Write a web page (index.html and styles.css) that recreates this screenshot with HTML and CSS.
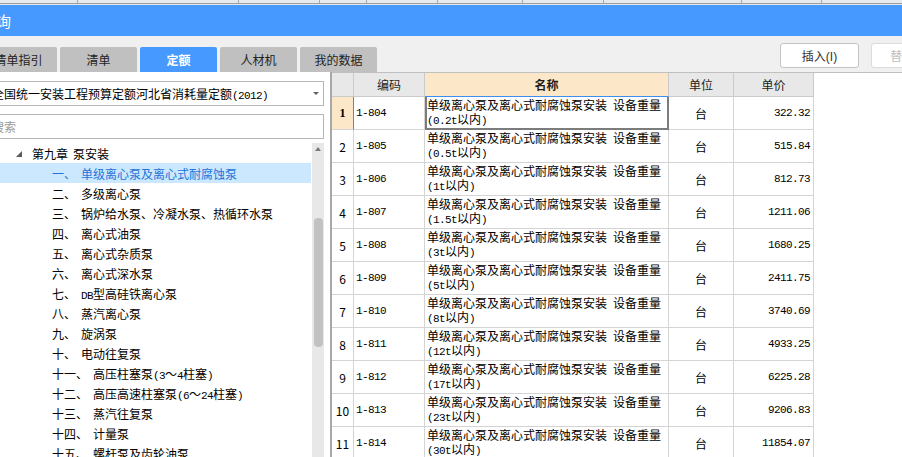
FILE: index.html
```html
<!DOCTYPE html>
<html lang="zh-CN">
<head>
<meta charset="utf-8">
<title>定额查询</title>
<link rel="stylesheet" href="styles.css">
</head>
<body>
<div class="app">
  <div class="ruler"><span></span><span></span><span></span><span></span><span></span><span></span><span></span><span></span><span></span><span></span></div>
  <div class="titlebar"><span class="title">查询</span></div>
  <div class="toolbar">
    <nav class="tabs">
      <div class="tab">清单指引</div>
      <div class="tab">清单</div>
      <div class="tab active">定额</div>
      <div class="tab">人材机</div>
      <div class="tab">我的数据</div>
    </nav>
    <div class="actions">
      <button class="btn">插入<span class="paren">(I)</span></button>
      <button class="btn disabled">替换<span class="paren">(R)</span></button>
    </div>
  </div>
  <div class="main">
    <aside class="left">
      <div class="combo"><span class="combo-text">全国统一安装工程预算定额河北省消耗量定额<span class="a">(2012)</span></span><span class="caret"></span></div>
      <input class="search" type="text" placeholder="搜索">
      <div class="treewrap">
        <ul class="tree">
          <li class="chapter"><span class="twist"></span><span>第九章</span><span class="gap">泵安装</span></li>
          <li class="item selected"><span class="num">一、</span><span>单级离心泵及离心式耐腐蚀泵</span></li>
          <li class="item"><span class="num">二、</span><span>多级离心泵</span></li>
          <li class="item"><span class="num">三、</span><span>锅炉给水泵、冷凝水泵、热循环水泵</span></li>
          <li class="item"><span class="num">四、</span><span>离心式油泵</span></li>
          <li class="item"><span class="num">五、</span><span>离心式杂质泵</span></li>
          <li class="item"><span class="num">六、</span><span>离心式深水泵</span></li>
          <li class="item"><span class="num">七、</span><span><span class="a">DB</span>型高硅铁离心泵</span></li>
          <li class="item"><span class="num">八、</span><span>蒸汽离心泵</span></li>
          <li class="item"><span class="num">九、</span><span>旋涡泵</span></li>
          <li class="item"><span class="num">十、</span><span>电动往复泵</span></li>
          <li class="item"><span class="num">十一、</span><span>高压柱塞泵<span class="a">(3</span>～<span class="a">4</span>柱塞<span class="a">)</span></span></li>
          <li class="item"><span class="num">十二、</span><span>高压高速柱塞泵<span class="a">(6</span>～<span class="a">24</span>柱塞<span class="a">)</span></span></li>
          <li class="item"><span class="num">十三、</span><span>蒸汽往复泵</span></li>
          <li class="item"><span class="num">十四、</span><span>计量泵</span></li>
          <li class="item"><span class="num">十五、</span><span>螺杆泵及齿轮油泵</span></li>
        </ul>
        <div class="vscroll"><span class="up"></span><span class="thumb"></span></div>
      </div>
    </aside>
    <section class="grid">
      <div class="c h"></div><div class="c h">编码</div><div class="c h hname">名称</div><div class="c h">单位</div><div class="c h">单价</div>

      <div class="c n cur">1</div><div class="c code a">1-804</div><div class="c name sel">单级离心泵及离心式耐腐蚀泵安装<span class="a"> </span>设备重量<br><span class="a">(0.2t</span>以内<span class="a">)</span></div><div class="c unit">台</div><div class="c price a">322.32</div>

      <div class="c n">2</div><div class="c code a">1-805</div><div class="c name">单级离心泵及离心式耐腐蚀泵安装<span class="a"> </span>设备重量<br><span class="a">(0.5t</span>以内<span class="a">)</span></div><div class="c unit">台</div><div class="c price a">515.84</div>

      <div class="c n">3</div><div class="c code a">1-806</div><div class="c name">单级离心泵及离心式耐腐蚀泵安装<span class="a"> </span>设备重量<br><span class="a">(1t</span>以内<span class="a">)</span></div><div class="c unit">台</div><div class="c price a">812.73</div>

      <div class="c n">4</div><div class="c code a">1-807</div><div class="c name">单级离心泵及离心式耐腐蚀泵安装<span class="a"> </span>设备重量<br><span class="a">(1.5t</span>以内<span class="a">)</span></div><div class="c unit">台</div><div class="c price a">1211.06</div>

      <div class="c n">5</div><div class="c code a">1-808</div><div class="c name">单级离心泵及离心式耐腐蚀泵安装<span class="a"> </span>设备重量<br><span class="a">(3t</span>以内<span class="a">)</span></div><div class="c unit">台</div><div class="c price a">1680.25</div>

      <div class="c n">6</div><div class="c code a">1-809</div><div class="c name">单级离心泵及离心式耐腐蚀泵安装<span class="a"> </span>设备重量<br><span class="a">(5t</span>以内<span class="a">)</span></div><div class="c unit">台</div><div class="c price a">2411.75</div>

      <div class="c n">7</div><div class="c code a">1-810</div><div class="c name">单级离心泵及离心式耐腐蚀泵安装<span class="a"> </span>设备重量<br><span class="a">(8t</span>以内<span class="a">)</span></div><div class="c unit">台</div><div class="c price a">3740.69</div>

      <div class="c n">8</div><div class="c code a">1-811</div><div class="c name">单级离心泵及离心式耐腐蚀泵安装<span class="a"> </span>设备重量<br><span class="a">(12t</span>以内<span class="a">)</span></div><div class="c unit">台</div><div class="c price a">4933.25</div>

      <div class="c n">9</div><div class="c code a">1-812</div><div class="c name">单级离心泵及离心式耐腐蚀泵安装<span class="a"> </span>设备重量<br><span class="a">(17t</span>以内<span class="a">)</span></div><div class="c unit">台</div><div class="c price a">6225.28</div>

      <div class="c n">10</div><div class="c code a">1-813</div><div class="c name">单级离心泵及离心式耐腐蚀泵安装<span class="a"> </span>设备重量<br><span class="a">(23t</span>以内<span class="a">)</span></div><div class="c unit">台</div><div class="c price a">9206.83</div>

      <div class="c n">11</div><div class="c code a">1-814</div><div class="c name">单级离心泵及离心式耐腐蚀泵安装<span class="a"> </span>设备重量<br><span class="a">(30t</span>以内<span class="a">)</span></div><div class="c unit">台</div><div class="c price a">11854.07</div>
    </section>
  </div>
</div>
</body>
</html>
```

FILE: styles.css
```css
html, body {
  margin: 0;
  padding: 0;
  background: #fff;
}

body {
  font-family: "Noto Sans CJK SC", "Noto Sans", sans-serif;
  font-size: 12px;
  color: #000;
}

.app {
  width: 902px;
  height: 457px;
  overflow: hidden;
  display: flex;
  flex-direction: column;
}

.a {
  font-family: "Liberation Mono", "DejaVu Sans Mono", monospace;
  font-size: 11px;
  letter-spacing: -0.6px;
}

/* top ruler strip */
.ruler {
  height: 3px;
  flex-shrink: 0;
  background: #e6e9f0;
  border-bottom: 1px solid #9c9c9c;
  display: grid;
  grid-template-columns: 78px 161px 81px 47px 71px 85px 81px 138px 80px 1fr;
}

.ruler span {
  border-right: 1px solid #a8a8a8;
}

.ruler span:last-child {
  border-right: 0;
}

/* blue title bar */
.titlebar {
  height: 31px;
  flex-shrink: 0;
  border-top: 1px solid #e4e6ea;
  background: #4599ff;
  color: #fff;
  display: flex;
  align-items: center;
}

.title {
  font-size: 15px;
  margin-left: -19px;
  white-space: nowrap;
}

/* tabs + buttons */
.toolbar {
  height: 36px;
  flex-shrink: 0;
  background: #f0f0f0;
  display: flex;
}

.tabs {
  display: flex;
  gap: 3px;
  margin-left: -20px;
  align-self: flex-end;
  flex-shrink: 0;
}

.tab {
  width: 77px;
  height: 25px;
  background: #c0c0c0;
  border-radius: 2px 2px 0 0;
  display: flex;
  align-items: center;
  justify-content: center;
  font-size: 12px;
  color: #1e1e1e;
  white-space: nowrap;
}

.tab.active {
  background: #4599ff;
  color: #fff;
  font-weight: bold;
}

.actions {
  display: flex;
  gap: 12px;
  margin-left: 403px;
  margin-top: 7px;
  flex-shrink: 0;
  align-self: flex-start;
}

.btn {
  width: 79px;
  height: 25px;
  padding: 0;
  background: #fff;
  border: 1px solid #c4c4c4;
  border-radius: 3px;
  font-family: "Noto Sans CJK SC", sans-serif;
  font-size: 12px;
  color: #333;
  flex-shrink: 0;
}

.btn .paren {
  font-family: "Liberation Sans", sans-serif;
}

.btn.disabled {
  color: #bdbdbd;
  border-color: #dcdcdc;
}

/* main split */
.main {
  flex: 1;
  display: flex;
  min-height: 0;
}

.left {
  width: 330px;
  flex-shrink: 0;
  border-right: 2px solid #a8a8a8;
  background: #fff;
  display: flex;
  flex-direction: column;
}

.combo {
  margin: 9px 6px 0 -14px;
  height: 25px;
  box-sizing: border-box;
  border: 1px solid #b6b6b6;
  padding-left: 5px;
  display: flex;
  align-items: center;
  white-space: nowrap;
}

.caret {
  margin-left: auto;
  margin-right: 4px;
  width: 0;
  height: 0;
  border-left: 3px solid transparent;
  border-right: 3px solid transparent;
  border-top: 3px solid #606060;
}

.search {
  display: block;
  margin: 8px 6px 0 -14px;
  width: 338px;
  height: 25px;
  box-sizing: border-box;
  border: 1px solid #b6b6b6;
  padding: 0 0 0 5px;
  font-family: "Noto Sans CJK SC", sans-serif;
  font-size: 12px;
  outline: none;
}

.search::placeholder {
  color: #9a9a9a;
}

.treewrap {
  margin-top: 4px;
  flex: 1;
  display: flex;
  min-height: 0;
}

.tree {
  list-style: none;
  margin: 0;
  padding: 0;
  width: 311px;
  flex-shrink: 0;
}

.tree li {
  height: 20px;
  display: flex;
  align-items: center;
  white-space: nowrap;
}

.chapter {
  padding-left: 16px;
}

.twist {
  width: 0;
  height: 0;
  border-style: solid;
  border-width: 0 0 6px 6px;
  border-color: transparent transparent #5a5a5a transparent;
  margin-right: 10px;
  margin-top: 1px;
}

.gap {
  margin-left: 5px;
}

.item {
  padding-left: 52px;
}

.num {
  margin-right: 5px;
}

.item.selected {
  background: #cce8ff;
  color: #1f74d8;
}

.vscroll {
  width: 12px;
  margin-left: 1px;
  background: #e8e8e8;
  display: flex;
  flex-direction: column;
  align-items: center;
}

.up {
  margin-top: 4px;
  width: 0;
  height: 0;
  border-left: 3px solid transparent;
  border-right: 3px solid transparent;
  border-bottom: 4px solid #7a7a7a;
}

.thumb {
  margin-top: 67px;
  width: 9px;
  height: 129px;
  border-radius: 4px;
  background: #c2c2c2;
}

/* data grid */
.grid {
  flex: 1;
  display: grid;
  grid-template-columns: 22px 71px 244px 65px 80px;
  grid-template-rows: 24px;
  grid-auto-rows: 33px;
  align-content: start;
  border-top: 1px solid #c0c0c0;
  background: #fff;
}

.c {
  box-sizing: border-box;
  border-right: 1px solid #d4d4d4;
  border-bottom: 1px solid #d4d4d4;
  display: flex;
  align-items: center;
  min-width: 0;
  white-space: nowrap;
}

.h {
  background: #e8e8e8;
  justify-content: center;
  border-color: #cacaca;
  color: #1e1e1e;
}

.h.hname {
  background: #fde7c9;
  font-weight: bold;
  border-bottom-color: #3d8ef0;
}

.n {
  justify-content: center;
}

.n.cur {
  background: #fde7c9;
  font-family: "Liberation Serif", serif;
  font-weight: bold;
  font-size: 12px;
  letter-spacing: 0;
  border-right-color: #3d8ef0;
}

.code {
  padding-left: 2px;
}

.name {
  display: block;
  padding: 1px 0 0 2px;
  line-height: 14px;
  white-space: normal;
}

.name .a {
  line-height: 10px;
}

.name.sel {
  border-right-color: #7c7c7c;
  border-bottom-color: #7c7c7c;
  box-shadow: inset 2px 0 0 #7c7c7c, inset -1px -1px 0 #7c7c7c;
}

.unit {
  justify-content: center;
}

.price {
  justify-content: flex-end;
  padding-right: 3px;
}
```
